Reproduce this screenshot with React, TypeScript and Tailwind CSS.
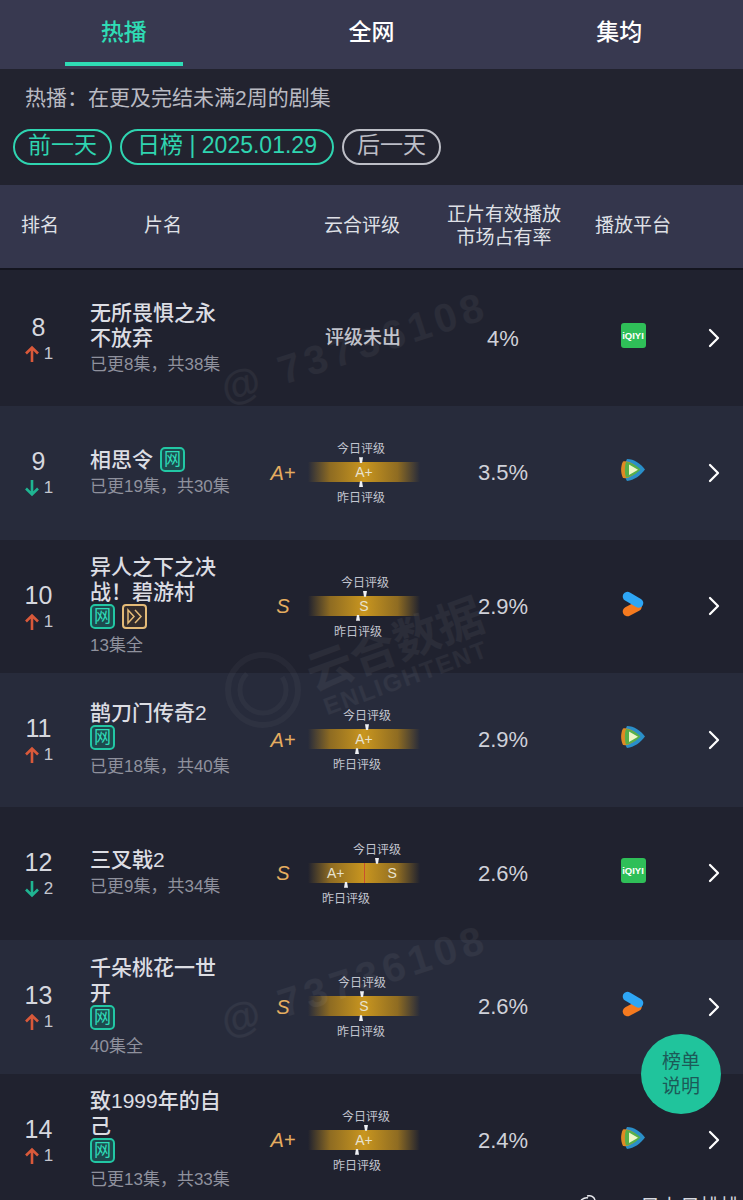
import React from 'react';
import { ChevronRight } from 'lucide-react';

const FONT = '"Liberation Sans", "Noto Sans CJK SC", sans-serif';

type Platform = 'iqiyi' | 'tencent' | 'youku';

interface Show {
  rank: number;
  up: boolean;
  delta: number;
  title: string[];
  net?: boolean;
  fast?: boolean;
  inlineBadge?: boolean;
  sub: string;
  grade?: string;
  split?: boolean;
  // centre of the today / yesterday markers, measured from the bar's left edge
  today?: number;
  yesterday?: number;
  share: string;
  platform: Platform;
}

const shows: Show[] = [
  { rank: 8, up: true, delta: 1, title: ['无所畏惧之永', '不放弃'], sub: '已更8集，共38集', share: '4%', platform: 'iqiyi' },
  { rank: 9, up: false, delta: 1, title: ['相思令'], net: true, inlineBadge: true, sub: '已更19集，共30集', grade: 'A+', today: 53, yesterday: 53, share: '3.5%', platform: 'tencent' },
  { rank: 10, up: true, delta: 1, title: ['异人之下之决', '战！碧游村'], net: true, fast: true, sub: '13集全', grade: 'S', today: 57, yesterday: 50, share: '2.9%', platform: 'youku' },
  { rank: 11, up: true, delta: 1, title: ['鹊刀门传奇2'], net: true, sub: '已更18集，共40集', grade: 'A+', today: 59, yesterday: 49, share: '2.9%', platform: 'tencent' },
  { rank: 12, up: false, delta: 2, title: ['三叉戟2'], sub: '已更9集，共34集', grade: 'S', split: true, today: 69, yesterday: 38, share: '2.6%', platform: 'iqiyi' },
  { rank: 13, up: true, delta: 1, title: ['千朵桃花一世', '开'], net: true, sub: '40集全', grade: 'S', today: 54, yesterday: 53, share: '2.6%', platform: 'youku' },
  { rank: 14, up: true, delta: 1, title: ['致1999年的自', '己'], net: true, sub: '已更13集，共33集', grade: 'A+', today: 58, yesterday: 49, share: '2.4%', platform: 'tencent' },
];

const Arrow = ({ up }: { up: boolean }) => (
  <svg width="16" height="18" viewBox="0 0 16 18" fill="none" stroke={up ? '#d9593a' : '#1fb592'} strokeWidth="2.6">
    {up ? <path d="M8 17V3M2 8.5L8 2.5l6 6" /> : <path d="M8 1v14M2 9.5l6 6 6-6" />}
  </svg>
);

const NetBadge = () => (
  <span className="flex h-[25px] w-[25px] shrink-0 items-center justify-center rounded-[5px] border-2 border-[#22c7a4] bg-[#1d4a4e] text-[17px] leading-none text-[#2fdcb8]">
    网
  </span>
);

const FastBadge = () => (
  <span className="flex h-[25px] w-[25px] shrink-0 items-center justify-center rounded-[4px] border-2 border-[#e4bb78] bg-[#332c2c]">
    <svg width="17" height="17" viewBox="0 0 17 17" fill="none" stroke="#e4bb78" strokeWidth="1.5">
      <path d="M2 2l6 6.5L2 15V2zM9 2l6 6.5L9 15" />
    </svg>
  </span>
);

const PlatformIcon = ({ platform }: { platform: Platform }) => {
  if (platform === 'iqiyi') {
    return (
      <span className="flex h-[25px] w-[25px] items-center justify-center rounded-[3px] bg-[#2fbf58] text-[9.5px] font-bold leading-none text-white">
        iQIYI
      </span>
    );
  }
  if (platform === 'tencent') {
    return (
      <svg width="26" height="24" viewBox="0 0 26 24">
        <path d="M7 1C14 1 21 6 25 11.5 21 17 14 22.5 7 23 3 18 4 6 7 1z" fill="#2a8fc9" />
        <path d="M3 3.5C9 2.5 15 6.5 19 11.5 15 16.5 9 21 3 20 .5 15 .5 8 3 3.5z" fill="#e08a24" />
        <path d="M6 4C11 4.5 17 7.5 20.5 11.5 17 15.500 11 19 6 19.5 4.500 15 4.500 8 6 4z" fill="#57b04a" />
        <path d="M9 6.500L18 11.800 9 17z" fill="#eef6c8" />
      </svg>
    );
  }
  return (
    <svg width="22" height="26" viewBox="0 0 22 26" fill="none" strokeWidth="9.5" strokeLinecap="round">
      <path d="M15 15.500L5.500 20.500" stroke="#f57a1f" />
      <path d="M5.500 5.500L16.500 12" stroke="#2ea6f5" />
    </svg>
  );
};

const Marker = ({ down, left, top }: { down: boolean; left: number; top: number }) => (
  <span
    className="absolute h-[6px] w-[4px] bg-[#eef0f4]"
    style={{ left: left - 2, top, clipPath: down ? 'polygon(0 0,100% 0,75% 100%,25% 100%)' : 'polygon(25% 0,75% 0,100% 100%,0 100%)' }}
  />
);

const GradeBar = ({ show }: { show: Show }) => {
  const today = show.today ?? 53;
  const yesterday = show.yesterday ?? 53;
  return (
    <div className="relative h-[63px] w-[112px] shrink-0">
      <span className="absolute top-0 whitespace-nowrap text-[12px] leading-[16px] text-[#c2c5cf]" style={{ left: today - 24 }}>今日评级</span>
      <span className="absolute bottom-[-2px] whitespace-nowrap text-[12px] leading-[16px] text-[#c2c5cf]" style={{ left: yesterday - 24 }}>昨日评级</span>
      <div className="absolute left-0 right-0 top-[21px] flex h-[20px] items-center justify-center bg-[linear-gradient(90deg,transparent,#8f6c22_20%,#c9961f_50%,#8f6c22_80%,transparent)] text-[14px] leading-none text-[#e8e2cf]">
        {show.split ? (
          <>
            <span className="flex h-full flex-1 items-center justify-center">A+</span>
            <span className="h-full w-px bg-[#c9502f]" />
            <span className="flex h-full flex-1 items-center justify-center">S</span>
          </>
        ) : (
          show.grade
        )}
      </div>
      <Marker down left={today} top={16} />
      <Marker down={false} left={yesterday} top={40} />
    </div>
  );
};

const Row = ({ show, index }: { show: Show; index: number }) => (
  <div className={`flex items-center ${index % 2 === 0 ? 'bg-[#20222f]' : 'bg-[#272b3b]'} ${index === 0 ? 'h-[136px]' : 'h-[133.5px]'}`}>
    <div className="flex w-[77px] shrink-0 flex-col items-center pb-[2px]">
      <span className="mb-[1px] text-[25px] leading-[32px] text-[#d5d7de]">{show.rank}</span>
      <span className="flex items-center gap-[4px] text-[17px] leading-[20px] text-[#c4c6cf]">
        <Arrow up={show.up} />
        <span>{show.delta}</span>
      </span>
    </div>
    <div className="flex w-[176px] shrink-0 flex-col pl-[13px]">
      {show.inlineBadge ? (
        <div className="flex items-center gap-[7px]">
          <span className="text-[21px] font-medium leading-[25px] text-[#dcdde3]">{show.title[0]}</span>
          <NetBadge />
        </div>
      ) : (
        show.title.map((t) => (
          <span key={t} className="whitespace-nowrap text-[21px] font-medium leading-[25px] text-[#dcdde3]">{t}</span>
        ))
      )}
      {!show.inlineBadge && show.net && (
        <div className="mb-[2px] flex items-center gap-[7px]">
          <NetBadge />
          {show.fast && <FastBadge />}
        </div>
      )}
      <span className="mt-[3px] whitespace-nowrap text-[17px] leading-[24px] text-[#8f919d]">{show.sub}</span>
    </div>
    <div className="flex w-[167px] shrink-0 items-center">
      {show.grade ? (
        <>
          <span className="w-[55px] shrink-0 pl-[5px] text-center text-[20px] italic leading-none text-[#e5ad60]">{show.grade}</span>
          <GradeBar show={show} />
        </>
      ) : (
        <span className="pl-[72px] text-[19px] font-medium text-[#c0c2cb]">评级未出</span>
      )}
    </div>
    <div className="w-[166px] shrink-0 text-center text-[22px] text-[#cfd1d9]">{show.share}</div>
    <div className="flex w-[94px] shrink-0 justify-center pb-[5px]">
      <PlatformIcon platform={show.platform} />
    </div>
    <div className="pl-[18px]">
      <ChevronRight size={32} strokeWidth={1.7} className="text-white" />
    </div>
  </div>
);

const App: React.FC = () => {
  return (
    <div className="relative h-[1200px] w-[743px] overflow-hidden bg-[#20222f]" style={{ fontFamily: FONT }}>
      <div className="flex h-[69px] bg-[#383950]">
        {['热播', '全网', '集均'].map((tab, i) => (
          <div key={tab} className="relative flex w-[248px] items-center justify-center pb-[5px] text-[23px] font-medium">
            <span className={i === 0 ? 'text-[#2fdcb5]' : 'text-white'}>{tab}</span>
            {i === 0 && <span className="absolute bottom-[3px] left-[65px] h-[4px] w-[118px] bg-[#2fdcb5]" />}
          </div>
        ))}
      </div>

      <div className="flex h-[116px] flex-col bg-[#22232f] pl-[13px] pt-[13px]">
        <p className="pl-[12px] text-[21px] leading-[32px] text-[#b9bac2]">热播：在更及完结未满2周的剧集</p>
        <div className="mt-[15px] flex gap-[8px] text-[23px] leading-none">
          <span className="flex h-[36px] w-[99px] items-center justify-center rounded-full border-2 border-[#2fd4b0] pb-[3px] text-[#2fd4b0]">前一天</span>
          <span className="flex h-[36px] w-[214px] items-center justify-center whitespace-nowrap rounded-full border-2 border-[#2fd4b0] pb-[3px] text-[#2fd4b0]">日榜 | 2025.01.29</span>
          <span className="flex h-[36px] w-[99px] items-center justify-center rounded-full border-2 border-[#bdbec6] pb-[3px] text-[#bdbec6]">后一天</span>
        </div>
      </div>

      <div className="flex h-[85px] items-center border-b-2 border-[#14151f] bg-[#34364c] pb-[2px] pl-[21px] text-[19px] leading-[23px] text-[#dfe0e6]">
        <span className="w-[123px] shrink-0">排名</span>
        <span className="w-[180px] shrink-0">片名</span>
        <span className="w-[123px] shrink-0 whitespace-nowrap">云合评级</span>
        <span className="w-[114px] shrink-0 whitespace-nowrap text-center">正片有效播放<br />市场占有率</span>
        <span className="whitespace-nowrap pl-[34px]">播放平台</span>
      </div>

      {shows.map((show, i) => (
        <Row key={show.rank} show={show} index={i} />
      ))}

      <div className="absolute left-[641px] top-[1034px] flex h-[80px] w-[80px] items-center justify-center rounded-full bg-[#20c49c] text-center text-[19px] leading-[25px] text-[#1c5a58]">
        榜单<br />说明
      </div>

      {/* watermarks */}
      <div className="pointer-events-none absolute left-[222px] top-[367px] origin-left -rotate-[18deg] whitespace-nowrap text-[40px] font-bold leading-[46px] tracking-[5px] text-white/[0.05]">@ 73736108</div>
      <div className="pointer-events-none absolute left-[222px] top-[1000px] origin-left -rotate-[18deg] whitespace-nowrap text-[40px] font-bold leading-[46px] tracking-[5px] text-white/[0.05]">@ 73736108</div>
      <div className="pointer-events-none absolute left-[295px] top-[615px] w-[200px] -rotate-[20deg] whitespace-nowrap text-center text-[46px] font-bold leading-[60px] text-white/[0.05]">云合数据</div>
      <div className="pointer-events-none absolute left-[306px] top-[663px] w-[200px] -rotate-[20deg] whitespace-nowrap text-center text-[24px] font-bold leading-[30px] tracking-[2px] text-white/[0.05]">ENLIGHTENT</div>
      <svg className="pointer-events-none absolute left-[224px] top-[651px]" width="78" height="78" viewBox="0 0 78 78" fill="none" stroke="#ffffff" strokeOpacity="0.035">
        <circle cx="39" cy="39" r="35" strokeWidth="6" />
        <circle cx="39" cy="39" r="23" strokeWidth="5" strokeDasharray="90 40" />
      </svg>

      {/* clipped site caption along the bottom edge */}
      <svg className="pointer-events-none absolute left-[578px] top-[1195px]" width="20" height="5" viewBox="0 0 20 5" fill="none" stroke="#e8e9ee" strokeWidth="1.5">
        <path d="M3 5C6 3 8 2 10 3M9 1c4-1 7 1 8 4" />
      </svg>
      <div className="pointer-events-none absolute left-[640px] top-[1195px] whitespace-nowrap text-[20px] leading-[24px] text-[#d5d7de]">日上日排排</div>
    </div>
  );
};

export default App;
